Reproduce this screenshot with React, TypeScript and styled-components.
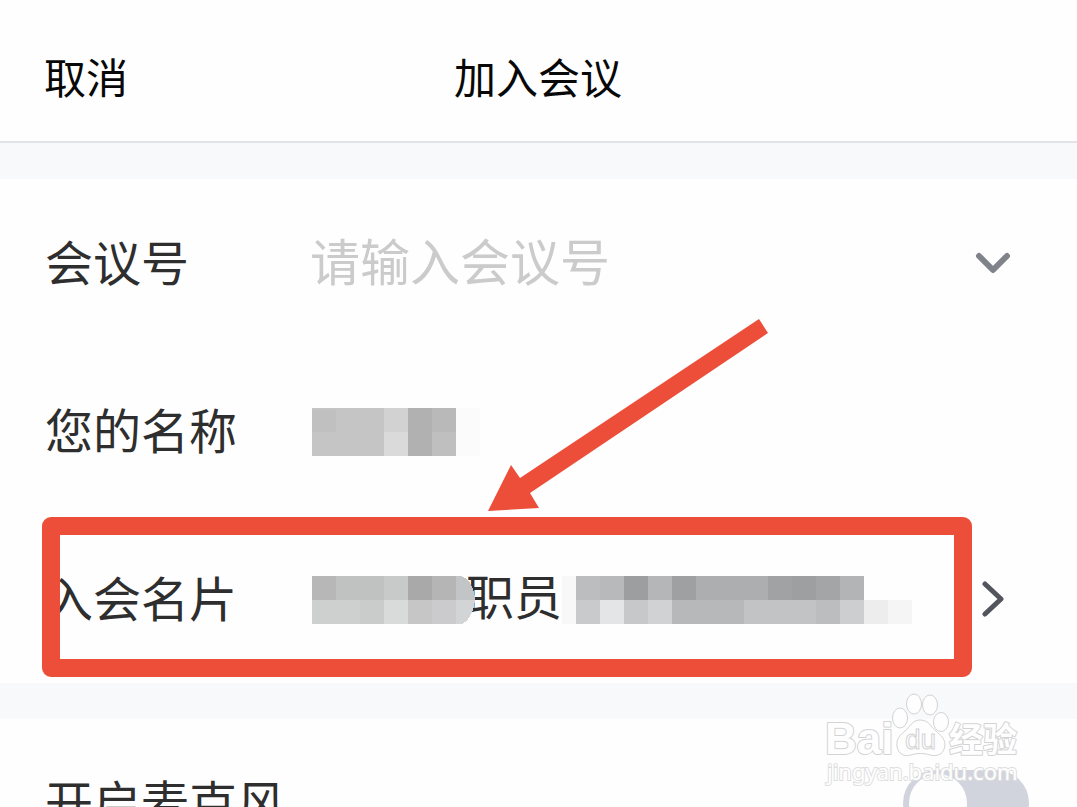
import React from 'react';
import styled, { createGlobalStyle } from 'styled-components';

const GlobalStyle = createGlobalStyle`
  * { box-sizing: border-box; }
  body {
    margin: 0;
    background: #fefefe;
    color: #2e2e2e;
    font-family: "Noto Sans CJK SC", sans-serif;
  }
  button, input { font: inherit; color: inherit; }
`;

const Page = styled.main`
  height: 100vh;
  overflow: hidden;
`;

const Header = styled.header`
  display: grid;
  grid-template-columns: 1fr auto 1fr;
  align-items: center;
  height: 143px;
  padding: 10px 45px 0 44px;
  border-bottom: 2px solid #e2e3e5;
  color: #080808;
  font-size: 42px;
  line-height: 60px;
`;

const CancelButton = styled.button`
  justify-self: start;
  padding: 0;
  border: 0;
  background: none;
  cursor: pointer;
`;

const Title = styled.h1`
  margin: 0;
  font-size: 42px;
  font-weight: 400;
`;

const Divider = styled.div`
  height: 36px;
  background: #f8f9fb;
`;

const Group = styled.section`
  display: flex;
  flex-direction: column;
`;

const Row = styled.div`
  position: relative;
  display: flex;
  align-items: center;
  height: 168px;
  padding: 0 48px 0 45px;
  font-size: 48px;
  line-height: 72px;
`;

const Label = styled.label<{ $wide?: boolean }>`
  flex: none;
  width: ${(p) => (p.$wide ? 'auto' : '265px')};
  margin-right: ${(p) => (p.$wide ? 'auto' : '0')};
  padding-bottom: 6px;
  white-space: nowrap;
`;

const MeetingInput = styled.input`
  flex: 1;
  min-width: 0;
  height: 80px;
  padding: 0 0 8px;
  border: 0;
  outline: 0;
  background: none;
  font-size: 50px;
  &::placeholder { color: #cbcbcb; opacity: 1; }
`;

const Value = styled.output`
  display: flex;
  flex: 1;
  align-items: center;
  min-width: 0;
  padding: 2px 0 0 2px;
  white-space: nowrap;
`;

const Mosaic = styled.svg`
  position: relative;
  flex: none;
  display: block;
  shape-rendering: crispEdges;
`;

const CardTitle = styled.span`
  margin-left: -10px;
  padding-bottom: 12px;
`;

const IconButton = styled.button`
  display: flex;
  flex: none;
  align-items: center;
  justify-content: center;
  width: 72px;
  height: 72px;
  padding: 0;
  border: 0;
  background: none;
  cursor: pointer;
`;

const Switch = styled.input`
  appearance: none;
  flex: none;
  width: 126px;
  height: 66px;
  margin: 0;
  padding: 4px 6px;
  border-radius: 33px;
  background: #d1d4dc;
  cursor: pointer;
  &::before {
    content: "";
    display: block;
    width: 58px;
    height: 58px;
    border-radius: 50%;
    background: #fefefe;
  }
  &:checked::before { margin-left: auto; }
`;

const Highlight = styled.div`
  position: absolute;
  inset: 2px 105px 6px 42px;
  border: 18px solid #ed4e39;
  border-radius: 9px;
  pointer-events: none;
`;

const Arrow = styled.svg`
  position: absolute;
  left: 488px;
  top: -197px;
  pointer-events: none;
`;

const Watermark = styled.svg`
  position: absolute;
  top: -29px;
  right: 55px;
  pointer-events: none;
`;

type Block = [x: number, y: number, w: number, h: number, fill: string];

const nameBlocks: Block[] = [
  [0, 0, 72, 48, '#c5c5c5'],
  [0, 2, 24, 22, '#c0c0c0'],
  [72, 0, 24, 24, '#d2d2d2'],
  [72, 24, 24, 24, '#dadada'],
  [96, 0, 24, 48, '#b1b1b1'],
  [120, 0, 24, 24, '#b9b9b9'],
  [120, 24, 24, 24, '#bfbfbf'],
  [144, 0, 24, 48, '#fbfbfb'],
];

const companyBlocks: Block[] = [
  [0, 0, 24, 24, '#b7b7b7'],
  [24, 0, 48, 24, '#c0c2c1'],
  [72, 0, 24, 24, '#c8c9c9'],
  [96, 0, 24, 24, '#a9a9a9'],
  [120, 0, 24, 24, '#b5b5b6'],
  [0, 24, 48, 24, '#ced0cf'],
  [48, 24, 24, 24, '#cacccb'],
  [72, 24, 24, 24, '#d9dada'],
  [96, 24, 24, 24, '#c6c6c7'],
  [120, 24, 24, 24, '#cbcbcd'],
];

const detailBlocks: Block[] = [
  [0, 0, 14, 48, '#f8f8f8'],
  [14, 0, 24, 24, '#bcbdbf'],
  [38, 0, 24, 24, '#b8b9ba'],
  [62, 0, 24, 24, '#9d9ea0'],
  [86, 0, 24, 24, '#b5b6b8'],
  [110, 0, 24, 24, '#9fa0a1'],
  [134, 0, 72, 24, '#adaeb0'],
  [206, 0, 24, 24, '#a1a2a4'],
  [230, 0, 24, 24, '#9d9fa1'],
  [254, 0, 24, 24, '#a4a5a7'],
  [278, 0, 24, 24, '#b3b4b6'],
  [14, 24, 24, 24, '#c8cacb'],
  [38, 24, 24, 24, '#e3e5e6'],
  [62, 24, 24, 24, '#c7c8ca'],
  [86, 24, 24, 24, '#d1d2d4'],
  [110, 24, 72, 24, '#b7b8ba'],
  [182, 24, 72, 24, '#c2c3c5'],
  [254, 24, 24, 24, '#bcbdbf'],
  [278, 24, 24, 24, '#cdced0'],
  [302, 24, 24, 24, '#ededed'],
  [326, 24, 24, 24, '#f5f5f5'],
];

const Blocks = ({ items }: { items: Block[] }) => (
  <>
    {items.map(([x, y, w, h, fill]) => (
      <rect key={`${x}-${y}-${w}`} x={x} y={y} width={w} height={h} fill={fill} />
    ))}
  </>
);

const BaiduMark = () => (
  <Watermark width="202" height="100" viewBox="0 0 202 100" aria-label="Baidu 经验">
    <g fill="#fefefe" stroke="#d3d3d5" strokeWidth="1">
      <ellipse cx="80" cy="28" rx="7.5" ry="10" />
      <ellipse cx="94" cy="14" rx="7.5" ry="10" />
      <ellipse cx="110" cy="15" rx="7.5" ry="10" />
      <ellipse cx="121" cy="32" rx="7.5" ry="9.5" />
      <path d="M100 30 C92 30 90 37 85 41 C80 45 76 49 77 56 C78 64 84 67 91 65 C97 63 104 63 110 65 C118 67 124 64 125 55 C125 48 120 45 116 41 C111 37 109 30 100 30Z" />
      <g strokeWidth="2" paintOrder="stroke" strokeLinejoin="round">
        <text x="5" y="64" fontFamily="Liberation Sans, sans-serif" fontWeight="700" fontSize="44">Bai</text>
        <text x="129" y="62" fontFamily="Noto Sans CJK SC, sans-serif" fontWeight="700" fontSize="34">经验</text>
      </g>
      <text x="85" y="59" fontFamily="Liberation Sans, sans-serif" fontSize="28">du</text>
      <text x="7" y="90" fontFamily="Noto Sans, sans-serif" fontSize="22" stroke="#dedee0" strokeWidth="2" paintOrder="stroke">jingyan.baidu.com</text>
    </g>
  </Watermark>
);

export default function App() {
  return (
    <Page>
      <GlobalStyle />
      <Header>
        <CancelButton type="button">取消</CancelButton>
        <Title>加入会议</Title>
      </Header>
      <Divider />
      <Group>
        <Row>
          <Label htmlFor="meeting">会议号</Label>
          <MeetingInput id="meeting" placeholder="请输入会议号" />
          <IconButton type="button" aria-label="展开会议号">
            <svg width="36" height="24" viewBox="0 0 36 24" fill="none" stroke="#80848a" strokeWidth="6" strokeLinecap="round" strokeLinejoin="round">
              <path d="M4 5 L18 19 L32 5" />
            </svg>
          </IconButton>
        </Row>
        <Row>
          <Label htmlFor="name">您的名称</Label>
          <Value id="name">
            <Mosaic width="168" height="48" aria-hidden="true">
              <Blocks items={nameBlocks} />
            </Mosaic>
          </Value>
        </Row>
        <Row>
          <Label htmlFor="card">入会名片</Label>
          <Value id="card">
            <Mosaic width="164" height="48" aria-hidden="true">
              <Blocks items={companyBlocks} />
              <path d="M144 0 H149 Q162 5 163 24 H144Z" fill="#c3c4c6" />
              <path d="M144 24 H163 Q161 42 150 48 H144Z" fill="#d3d4d5" />
            </Mosaic>
            <CardTitle>职员</CardTitle>
            <Mosaic width="350" height="48" aria-hidden="true">
              <Blocks items={detailBlocks} />
            </Mosaic>
          </Value>
          <IconButton type="button" aria-label="选择名片">
            <svg width="24" height="36" viewBox="0 0 24 36" fill="none" stroke="#52555e" strokeWidth="5" strokeLinecap="round" strokeLinejoin="round">
              <path d="M4 3 L20 18 L4 33" />
            </svg>
          </IconButton>
          <Highlight />
          <Arrow width="280" height="194" viewBox="0 0 280 194" aria-hidden="true">
            <path d="M0 193 L23 147 L32 160 L271 1 L280 15 L42 175 L51 190Z" fill="#ed4e39" />
          </Arrow>
        </Row>
      </Group>
      <Divider />
      <Group>
        <Row>
          <Label htmlFor="mic" $wide>开启麦克风</Label>
          <Switch id="mic" type="checkbox" />
          <BaiduMark />
        </Row>
      </Group>
    </Page>
  );
}
